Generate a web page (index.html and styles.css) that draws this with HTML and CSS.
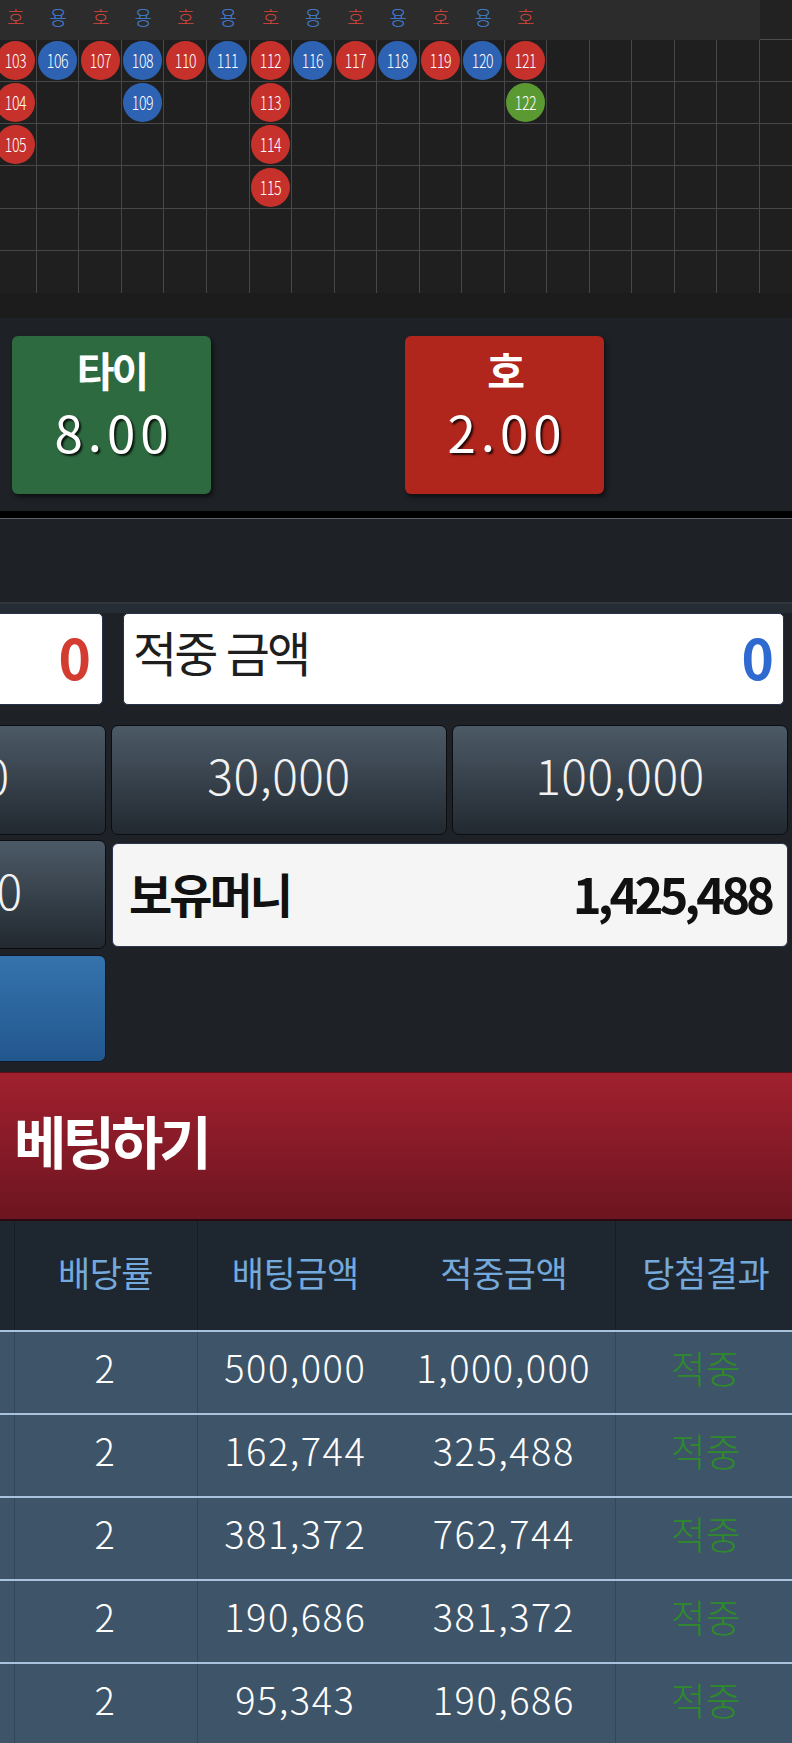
FILE: index.html
```html
<!DOCTYPE html>
<html lang="ko">
<head>
<meta charset="utf-8">
<title>베팅</title>
<link rel="stylesheet" href="styles.css">
</head>
<body>
<div class="page">
  <section class="road">
    <div class="road-cols">
      <div class="rcol"><div class="rhead ho">호</div><div class="rcell"><span class="bead red"><span>103</span></span></div><div class="rcell"><span class="bead red"><span>104</span></span></div><div class="rcell"><span class="bead red"><span>105</span></span></div><div class="rcell"></div><div class="rcell"></div><div class="rcell"></div></div>
      <div class="rcol"><div class="rhead yong">용</div><div class="rcell"><span class="bead blue"><span>106</span></span></div><div class="rcell"></div><div class="rcell"></div><div class="rcell"></div><div class="rcell"></div><div class="rcell"></div></div>
      <div class="rcol"><div class="rhead ho">호</div><div class="rcell"><span class="bead red"><span>107</span></span></div><div class="rcell"></div><div class="rcell"></div><div class="rcell"></div><div class="rcell"></div><div class="rcell"></div></div>
      <div class="rcol"><div class="rhead yong">용</div><div class="rcell"><span class="bead blue"><span>108</span></span></div><div class="rcell"><span class="bead blue"><span>109</span></span></div><div class="rcell"></div><div class="rcell"></div><div class="rcell"></div><div class="rcell"></div></div>
      <div class="rcol"><div class="rhead ho">호</div><div class="rcell"><span class="bead red"><span>110</span></span></div><div class="rcell"></div><div class="rcell"></div><div class="rcell"></div><div class="rcell"></div><div class="rcell"></div></div>
      <div class="rcol"><div class="rhead yong">용</div><div class="rcell"><span class="bead blue"><span>111</span></span></div><div class="rcell"></div><div class="rcell"></div><div class="rcell"></div><div class="rcell"></div><div class="rcell"></div></div>
      <div class="rcol"><div class="rhead ho">호</div><div class="rcell"><span class="bead red"><span>112</span></span></div><div class="rcell"><span class="bead red"><span>113</span></span></div><div class="rcell"><span class="bead red"><span>114</span></span></div><div class="rcell"><span class="bead red"><span>115</span></span></div><div class="rcell"></div><div class="rcell"></div></div>
      <div class="rcol"><div class="rhead yong">용</div><div class="rcell"><span class="bead blue"><span>116</span></span></div><div class="rcell"></div><div class="rcell"></div><div class="rcell"></div><div class="rcell"></div><div class="rcell"></div></div>
      <div class="rcol"><div class="rhead ho">호</div><div class="rcell"><span class="bead red"><span>117</span></span></div><div class="rcell"></div><div class="rcell"></div><div class="rcell"></div><div class="rcell"></div><div class="rcell"></div></div>
      <div class="rcol"><div class="rhead yong">용</div><div class="rcell"><span class="bead blue"><span>118</span></span></div><div class="rcell"></div><div class="rcell"></div><div class="rcell"></div><div class="rcell"></div><div class="rcell"></div></div>
      <div class="rcol"><div class="rhead ho">호</div><div class="rcell"><span class="bead red"><span>119</span></span></div><div class="rcell"></div><div class="rcell"></div><div class="rcell"></div><div class="rcell"></div><div class="rcell"></div></div>
      <div class="rcol"><div class="rhead yong">용</div><div class="rcell"><span class="bead blue"><span>120</span></span></div><div class="rcell"></div><div class="rcell"></div><div class="rcell"></div><div class="rcell"></div><div class="rcell"></div></div>
      <div class="rcol"><div class="rhead ho">호</div><div class="rcell"><span class="bead red"><span>121</span></span></div><div class="rcell"><span class="bead green"><span>122</span></span></div><div class="rcell"></div><div class="rcell"></div><div class="rcell"></div><div class="rcell"></div></div>
      <div class="rcol"><div class="rhead"></div><div class="rcell"></div><div class="rcell"></div><div class="rcell"></div><div class="rcell"></div><div class="rcell"></div><div class="rcell"></div></div>
      <div class="rcol"><div class="rhead"></div><div class="rcell"></div><div class="rcell"></div><div class="rcell"></div><div class="rcell"></div><div class="rcell"></div><div class="rcell"></div></div>
      <div class="rcol"><div class="rhead"></div><div class="rcell"></div><div class="rcell"></div><div class="rcell"></div><div class="rcell"></div><div class="rcell"></div><div class="rcell"></div></div>
      <div class="rcol"><div class="rhead"></div><div class="rcell"></div><div class="rcell"></div><div class="rcell"></div><div class="rcell"></div><div class="rcell"></div><div class="rcell"></div></div>
      <div class="rcol"><div class="rhead"></div><div class="rcell"></div><div class="rcell"></div><div class="rcell"></div><div class="rcell"></div><div class="rcell"></div><div class="rcell"></div></div>
      <div class="rcol rcol-end"><div class="rhead"></div><div class="rcell"></div><div class="rcell"></div><div class="rcell"></div><div class="rcell"></div><div class="rcell"></div><div class="rcell"></div></div>
    </div>
  </section>

  <section class="odds">
    <div class="odd odd-tie">
      <div class="odd-name">타이</div>
      <div class="odd-val">8.00</div>
    </div>
    <div class="odd odd-ho">
      <div class="odd-name">호</div>
      <div class="odd-val">2.00</div>
    </div>
  </section>
  <div class="sep-black"></div>
  <section class="blank"></section>

  <section class="panel">
    <div class="panel-inner">
      <div class="sum-row">
        <div class="wbox wbox-small"><span class="wlabel">배팅 금액</span><span class="wnum wnum-red">0</span></div>
        <div class="wbox wbox-wide"><span class="wlabel">적중 금액</span><span class="wnum wnum-blue">0</span></div>
      </div>
      <div class="chips">
        <div class="chip">10,000</div>
        <div class="chip">30,000</div>
        <div class="chip">100,000</div>
        <div class="chip">300,000</div>
        <div class="money"><span class="money-label">보유머니</span><span class="money-val">1,425,488</span></div>
        <div class="chip chip-blue">리셋</div>
      </div>
    </div>
  </section>

  <section class="banner">베팅하기</section>

  <table class="bets">
    <colgroup>
      <col class="c0"><col class="c1"><col class="c2"><col class="c3"><col class="c4">
    </colgroup>
    <thead>
      <tr><th>배팅</th><th class="sep">배당률</th><th class="sep">배팅금액</th><th>적중금액</th><th class="sep">당첨결과</th></tr>
    </thead>
    <tbody>
      <tr><td>호</td><td class="sep">2</td><td class="sep">500,000</td><td>1,000,000</td><td class="sep win">적중</td></tr>
      <tr><td>호</td><td class="sep">2</td><td class="sep">162,744</td><td>325,488</td><td class="sep win">적중</td></tr>
      <tr><td>호</td><td class="sep">2</td><td class="sep">381,372</td><td>762,744</td><td class="sep win">적중</td></tr>
      <tr><td>호</td><td class="sep">2</td><td class="sep">190,686</td><td>381,372</td><td class="sep win">적중</td></tr>
      <tr><td>호</td><td class="sep">2</td><td class="sep">95,343</td><td>190,686</td><td class="sep win">적중</td></tr>
    </tbody>
  </table>
</div>
</body>
</html>
```

FILE: styles.css
```css
* { box-sizing: border-box; }

html, body {
  margin: 0;
  padding: 0;
  background: #1e2226;
  overflow: hidden;
}

body {
  font-family: "Noto Sans CJK KR", "Noto Sans", sans-serif;
}

.page {
  width: 792px;
  overflow: hidden;
}

/* ---------- road grid ---------- */
.road {
  height: 318px;
  background: #1c1c1c;
  overflow: hidden;
}

.road-cols {
  display: flex;
  margin-left: -5.6px;
}

.rcol {
  flex: 0 0 42.53px;
  display: flex;
  flex-direction: column;
}

.rhead {
  height: 40px;
  background: #2c2c2c;
  display: flex;
  align-items: center;
  justify-content: center;
  font-size: 19px;
  font-weight: 300;
  line-height: 1;
  padding-bottom: 7px;
}

.rhead.ho { color: #d8453b; }
.rhead.yong { color: #4284de; }

.rcol-end .rhead {
  background: #222222;
  border-bottom: 1px solid #4d4d4d;
}

.rcell {
  height: 42.17px;
  background: #1f1f1f;
  border-right: 1px solid #474747;
  border-bottom: 1px solid #474747;
  display: flex;
  align-items: center;
  justify-content: center;
}

.rcell:last-child { border-bottom: none; }

.bead {
  width: 39px;
  height: 39px;
  border-radius: 50%;
  display: flex;
  align-items: center;
  justify-content: center;
  color: #ffffff;
  font-size: 19px;
  font-weight: 300;
  line-height: 1;
  padding-bottom: 2px;
}

.bead span {
  display: inline-block;
  transform: scaleX(0.74);
  letter-spacing: -0.5px;
}

.bead.red { background: #c6312b; }
.bead.blue { background: #2e63b4; }
.bead.green { background: #5b9932; }

/* ---------- odds ---------- */
.odds {
  height: 193px;
  padding: 18px 0 0 12px;
  display: flex;
  gap: 194px;
  background: #1e2226;
}

.odd {
  width: 199px;
  height: 158px;
  border-radius: 6px;
  box-shadow: 2px 3px 5px rgba(0, 0, 0, 0.55);
  text-align: center;
  color: #ffffff;
  padding-top: 8px;
}

.odd-tie { background: #2e6a3f; }
.odd-ho { background: #b0251c; }

.odd-name {
  height: 50px;
  line-height: 50px;
  font-size: 41px;
  font-weight: 700;
  letter-spacing: -3px;
}

.odd-val {
  height: 74px;
  line-height: 74px;
  font-size: 51px;
  font-weight: 400;
  letter-spacing: 5px;
  text-indent: 5px;
  text-shadow: 2px 2px 2px rgba(0, 0, 0, 0.8);
}

.sep-black {
  height: 8px;
  background: #000000;
  border-bottom: 1px solid #5a6066;
}

.blank {
  height: 83px;
  background: #1e2226;
}

/* ---------- panel ---------- */
.panel {
  border-top: 2px solid #30373f;
  padding-top: 9px;
  background: linear-gradient(to bottom, #262c34 0, #262c34 9px, #1e2226 9px);
}

.panel-inner {
  margin-left: -230px;
  width: 1030px;
}

.sum-row {
  display: flex;
  gap: 20px;
  height: 92px;
}

.wbox {
  height: 92px;
  background: #ffffff;
  border: 1px solid #27314a;
  border-radius: 5px;
  display: flex;
  align-items: center;
  justify-content: space-between;
  padding: 0 9px;
}

.wbox-small { width: 333px; padding-right: 11px; }
.wbox-wide { width: 661px; }

.wlabel {
  font-size: 48px;
  font-weight: 400;
  letter-spacing: -3px;
  color: #1e1e1e;
  line-height: 1;
  padding-bottom: 16px;
}

.wnum {
  font-size: 55px;
  font-weight: 700;
  line-height: 1;
  padding-bottom: 6px;
}

.wnum-red { color: #d23c31; }
.wnum-blue { color: #2f6ad0; }

.chips {
  margin-top: 20px;
  display: grid;
  grid-template-columns: 336px 336px 336px;
  grid-template-rows: 110px 109px 108px;
  column-gap: 5px;
  row-gap: 5px;
}

.chips .chip:nth-child(6) { margin-top: 1px; }

.chip {
  border: 1px solid #0b0d10;
  border-radius: 7px;
  background: linear-gradient(to bottom, #4c5a67, #222930);
  color: #f2f2f2;
  font-size: 48px;
  font-weight: 300;
  letter-spacing: 0.5px;
  line-height: 1;
  display: flex;
  align-items: center;
  justify-content: center;
  padding-bottom: 12px;
}

.chip-blue {
  background: linear-gradient(to bottom, #3573ad, #22578e);
  border-color: #101a28;
}

.money {
  grid-column: 2 / span 2;
  margin: 3px 0 2px 1px;
  background: #f5f5f5;
  border: 1px solid #2b3550;
  border-radius: 6px;
  display: flex;
  align-items: center;
  justify-content: space-between;
  padding: 0 16px 0 16px;
  color: #111111;
  font-weight: 700;
  line-height: 1;
}

.money-label {
  font-size: 47px;
  letter-spacing: -3px;
  padding-bottom: 6px;
}

.money-val {
  font-size: 49px;
  letter-spacing: -4px;
  padding-bottom: 6px;
}

/* ---------- banner ---------- */
.banner {
  margin-top: 10px;
  height: 149px;
  background: linear-gradient(to bottom, #a1202e, #6c1520);
  border-top: 1px solid #5a1018;
  border-bottom: 2px solid #2a0a0e;
  color: #ffffff;
  font-size: 57px;
  font-weight: 700;
  letter-spacing: -4px;
  line-height: 1;
  display: flex;
  align-items: center;
  padding-left: 14px;
  padding-bottom: 14px;
}

/* ---------- table ---------- */
.bets {
  margin-left: -86px;
  width: 882px;
  border-collapse: collapse;
  table-layout: fixed;
}

.bets .c0 { width: 100px; }
.bets .c1 { width: 183px; }
.bets .c2 { width: 196px; }
.bets .c3 { width: 222px; }
.bets .c4 { width: 181px; }

.bets th {
  height: 110px;
  background: #1e2630;
  color: #74a9dc;
  font-size: 35px;
  font-weight: 400;
  letter-spacing: -0.5px;
  line-height: 1;
  text-align: center;
  padding: 0 0 8px 0;
}

.bets th.sep { border-left: 1px solid #161d26; }

.bets td {
  height: 83px;
  background: #3e5468;
  border-top: 2px solid #a8c3db;
  color: #ffffff;
  font-size: 38px;
  font-weight: 300;
  letter-spacing: 1.5px;
  line-height: 1;
  text-align: center;
  padding: 0 0 12px 0;
}

.bets td.sep { border-left: 1px solid #34475a; }

.bets td.win {
  color: #2e8a2b;
  font-size: 38px;
  letter-spacing: 0;
}
```
